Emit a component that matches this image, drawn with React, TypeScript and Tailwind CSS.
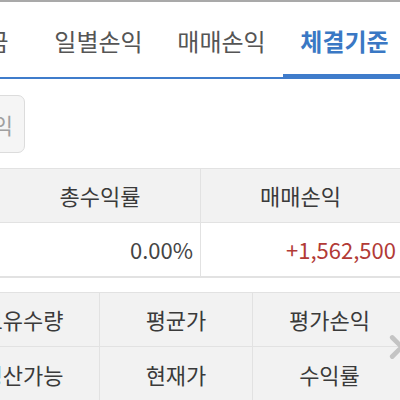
import { ChevronRight } from "lucide-react";

const tabs = ["예수금", "일별손익", "매매손익", "체결기준"];
const active = 3;

const grid = [
  ["보유수량", "평균가", "평가손익"],
  ["청산가능", "현재가", "수익률"],
];

export default function App() {
  return (
    <div
      className="relative w-[400px] h-[400px] overflow-hidden bg-white text-[#333]"
      style={{ fontFamily: '"Noto Sans CJK KR", "Noto Sans", sans-serif' }}
    >
      <div className="h-[2px] bg-[#a9a9a9]" />

      {/* tabs */}
      <div className="relative h-[77px] border-b-2 border-[#3f7ccb]">
        <div className="flex ml-[-86px] h-full">
          {tabs.map((t, i) => (
            <div
              key={t}
              className={
                "relative w-[123px] shrink-0 flex items-center justify-center pt-[2px] text-[24px] " +
                (i === active ? "text-[#3a78c4] font-bold" : "text-[#555]")
              }
            >
              {t}
              {i === active && <div className="absolute left-0 right-0 bottom-[-2px] h-[5px] bg-[#3f7ccb]" />}
            </div>
          ))}
        </div>
      </div>

      {/* button */}
      <div className="h-[89px] pt-[16px]">
        <div className="ml-[-50px] w-[75px] h-[58px] rounded-[7px] border border-[#dcdcdc] bg-[#f5f5f5] flex items-center justify-end pr-[11px] text-[22px] text-[#a0a0a0]">
          손익
        </div>
      </div>

      {/* summary table */}
      <div className="border-t border-b-2 border-[#e2e2e2]">
        <div className="flex h-[54px] bg-[#f2f2f2] border-b border-[#e2e2e2] text-[22px] text-[#3a3a3a]">
          <div className="w-[201px] flex items-center justify-center border-r border-[#e2e2e2]">총수익률</div>
          <div className="flex-1 flex items-center justify-center">매매손익</div>
        </div>
        <div className="flex h-[53px] text-[22px]">
          <div className="w-[201px] flex items-center justify-end pr-[7px] border-r border-[#e2e2e2] text-[#444]">
            0.00%
          </div>
          <div className="flex-1 flex items-center justify-end pr-[4px] text-[#b23a36]">+1,562,500</div>
        </div>
      </div>

      {/* grid */}
      <div className="mt-[14px] border-t border-[#e2e2e2] bg-[#f2f2f2]">
        {grid.map((row, r) => (
          <div key={r} className={"flex h-[54px] ml-[-53px] " + (r === 0 ? "border-b border-[#e2e2e2]" : "")}>
            {row.map((c, i) => (
              <div
                key={c}
                className={
                  "w-[153px] shrink-0 flex items-center justify-center text-[22px] text-[#3a3a3a] " +
                  (i < 2 ? "border-r border-[#e2e2e2]" : "")
                }
              >
                {c}
              </div>
            ))}
          </div>
        ))}
      </div>

      <ChevronRight
        className="absolute left-[378px] top-[328px] w-[38px] h-[38px] text-[#c4c4c4]"
        strokeWidth={3}
      />
    </div>
  );
}
